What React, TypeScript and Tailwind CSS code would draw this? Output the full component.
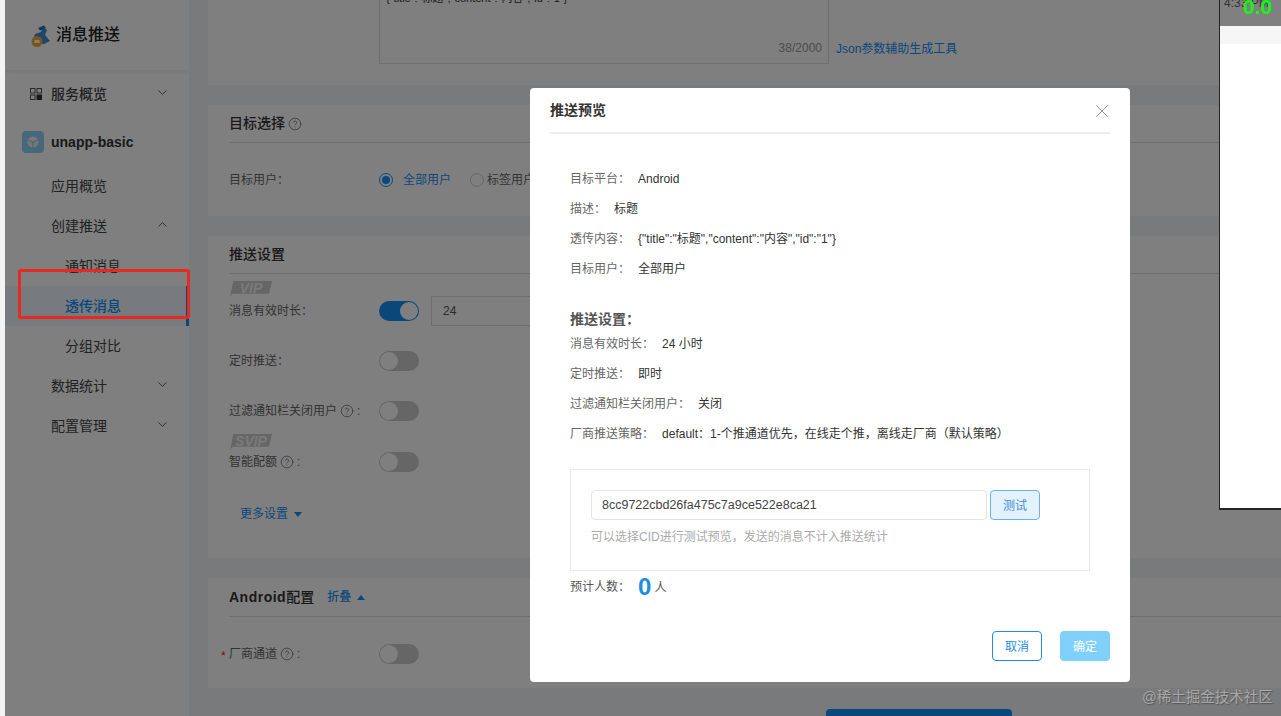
import React from 'react';
import { ChevronDown, ChevronUp, CircleHelp, X } from 'lucide-react';

const Toggle = ({ on = false }: { on?: boolean }) => (
  <div className={`flex h-5 w-10 items-center rounded-full ${on ? 'justify-end bg-[#1490f8]' : 'justify-start bg-[#ccc]'}`}>
    <div className="h-[18px] w-[18px] rounded-full bg-white mx-px" />
  </div>
);

const Badge = ({ text }: { text: string }) => (
  <div className="flex h-4 w-[42px] items-center justify-center bg-[#cccccc] text-[14px] font-bold italic leading-none text-[#f4f4f4] [clip-path:polygon(8%_0,100%_0,93%_80%,6%_80%,0_100%)]">
    <span className="-mt-[3px]">{text}</span>
  </div>
);

const SideRow = ({ label, sub, open, active, bold }: { label: string; sub?: boolean; open?: boolean; active?: boolean; bold?: boolean }) => (
  <div className={`relative flex h-10 items-center justify-between pr-[19px] text-[14px] ${sub ? 'pl-[60px]' : 'pl-[46px]'} ${active ? 'bg-[#eef6ff] text-[#1490f8]' : 'text-[#444]'} ${bold ? 'font-medium' : ''}`}>
    <span>{label}</span>
    {open === true && <ChevronUp size={15} strokeWidth={1.5} className="-mt-1 text-[#555]" />}
    {open === false && <ChevronDown size={15} strokeWidth={1.5} className="-mt-1 text-[#555]" />}
    {active && <div className="absolute right-0 top-0 h-10 w-[3px] bg-[#1490f8]" />}
  </div>
);

const Sidebar = () => (
  <aside className="w-[184px] shrink-0 bg-white">
    <div className="flex h-[70px] items-center gap-[6px] pb-px pl-[25px] shadow-[0_2px_4px_rgba(0,0,0,0.08)]">
      <svg width="20" height="22" viewBox="0 0 20 22" className="mt-[2px]">
        <path d="M2 18 L5 9 L11 7 L13 2 L17 5 L15 10 L20 16 L14 19 Z" fill="#3b8fd0" />
        <path d="M8 3 L14 0.5 L16 3 L10 5.5 Z" fill="#2a6ea8" />
        <circle cx="7" cy="16.5" r="5.5" fill="#f2a83b" />
        <rect x="4.5" y="15" width="5" height="3" fill="#fff" />
      </svg>
      <span className="text-[16px] font-medium text-[#222]">消息推送</span>
    </div>
    <div className="relative mt-1">
      <svg width="12" height="12" viewBox="0 0 12 12" className="absolute left-[25px] top-[14px]">
        <rect x="0.5" y="0.5" width="4.5" height="4.5" fill="none" stroke="#555" />
        <rect x="7" y="0.5" width="4.5" height="4.5" fill="none" stroke="#555" />
        <rect x="0.5" y="7" width="4.5" height="4.5" fill="none" stroke="#555" />
        <rect x="6.5" y="6.5" width="5.5" height="5.5" fill="#333" />
      </svg>
      <SideRow label="服务概览" open={false} bold />
    </div>
    <div className="mt-2 flex h-10 items-center gap-[7px] pl-[17px]">
      <div className="flex h-[22px] w-[22px] items-center justify-center rounded bg-[#8fd0f5]">
        <svg width="12" height="12" viewBox="0 0 12 12">
          <circle cx="6" cy="6" r="5.5" fill="#e6f3fb" />
          <path d="M1.5 4 L6 6.5 L10.5 4 M6 6.5 V11.5" stroke="#8fb9d4" fill="none" />
        </svg>
      </div>
      <span className="text-[14px] font-bold text-[#333]">unapp-basic</span>
    </div>
    <div className="mt-1">
      <SideRow label="应用概览" />
      <SideRow label="创建推送" open />
      <SideRow label="通知消息" sub />
      <SideRow label="透传消息" sub active bold />
      <SideRow label="分组对比" sub />
      <SideRow label="数据统计" open={false} />
      <SideRow label="配置管理" open={false} />
    </div>
  </aside>
);

const Help = () => <CircleHelp size={14} strokeWidth={1.25} className="mx-[3px] inline-block text-[#666]" />;

const FormRow = ({ label, children }: { label: React.ReactNode; children?: React.ReactNode }) => (
  <div className="flex h-[30px] items-center">
    <div className="w-[150px] shrink-0 text-[12px] text-[#666]">{label}</div>
    {children}
  </div>
);

const CardHead = ({ children, h }: { children: React.ReactNode; h: string }) => (
  <div className={`flex items-center border-b border-[#ddd] text-[14px] font-medium text-[#333] ${h}`}>{children}</div>
);

const Main = () => (
  <main className="min-w-0 flex-1 bg-[#f2f5f8] pl-[19px]">
    {/* scrolled part of the message form */}
    <section className="h-[85px] overflow-hidden bg-white pl-[171px]">
      <div className="-mt-[10px] flex items-end gap-[7px]">
        <div className="flex h-[74px] w-[450px] flex-col justify-between border border-[#ddd] px-[6px] text-[11px] text-[#333]">
          <div className="leading-[14px]">{'{"title":"标题","content":"内容","id":"1"}'}</div>
          <div className="mb-[6px] text-right text-[12px] text-[#999]">38/2000</div>
        </div>
        <span className="mb-[6px] text-[12px] text-[#1490f8]">Json参数辅助生成工具</span>
      </div>
    </section>

    <section className="mt-5 h-[111px] bg-white pl-[21px]">
      <CardHead h="h-[38px]">
        目标选择<Help />
      </CardHead>
      <div className="mt-[22px]">
        <FormRow label="目标用户：">
          <div className="flex h-[14px] w-[14px] items-center justify-center rounded-full border border-[#1490f8]">
            <div className="h-2 w-2 rounded-full bg-[#1490f8]" />
          </div>
          <span className="ml-[10px] text-[12px] text-[#1490f8]">全部用户</span>
          <div className="ml-[19px] h-[14px] w-[14px] rounded-full border border-[#ccc]" />
          <span className="ml-[3px] text-[12px] text-[#666]">标签用户</span>
        </FormRow>
      </div>
    </section>

    <section className="mt-5 h-[322px] bg-white pl-[21px]">
      <CardHead h="h-[38px]">推送设置</CardHead>
      <div className="ml-px pt-[7px]">
        <Badge text="VIP" />
      </div>
      <div className="-mt-px">
        <FormRow label="消息有效时长：">
          <Toggle on />
          <div className="ml-3 flex h-[30px] w-[300px] items-center border border-[#ddd] px-[11px] text-[12px] text-[#555]">24</div>
        </FormRow>
      </div>
      <div className="mt-5">
        <FormRow label="定时推送：">
          <Toggle />
        </FormRow>
      </div>
      <div className="mt-5">
        <FormRow label={<span className="flex items-center">过滤通知栏关闭用户<Help />:</span>}>
          <Toggle />
        </FormRow>
      </div>
      <div className="ml-px mt-2">
        <Badge text="SVIP" />
      </div>
      <div className="-mt-[3px]">
        <FormRow label={<span className="flex items-center">智能配额<Help />:</span>}>
          <Toggle />
        </FormRow>
      </div>
      <div className="ml-[11px] mt-[22px] flex h-[30px] items-center gap-[6px] text-[12px] text-[#1490f8]">
        更多设置
        <div className="h-0 w-0 border-x-[4px] border-t-[5px] border-x-transparent border-t-[#1490f8]" />
      </div>
    </section>

    <section className="mt-5 h-[110px] bg-white pl-[21px]">
      <CardHead h="h-[39px]">
        <span className="font-bold tracking-[0.5px]">Android</span>配置
        <span className="ml-[13px] text-[12px] text-[#1490f8]">折叠</span>
        <div className="ml-[6px] h-0 w-0 border-x-[4px] border-b-[5px] border-x-transparent border-b-[#1490f8]" />
      </CardHead>
      <div className="relative mt-[22px]">
        <span className="absolute -left-2 top-[8px] text-[12px] text-[#f5222d]">*</span>
        <FormRow label={<span className="flex items-center">厂商通道<Help />:</span>}>
          <Toggle />
        </FormRow>
      </div>
    </section>

    <div className="ml-[618px] mt-[21px] h-10 w-[186px] rounded-sm bg-[#1490f8]" />
  </main>
);

const InfoRow = ({ label, value }: { label: string; value: string }) => (
  <div className="flex h-[30px] items-center gap-2 text-[12px]">
    <span className="text-[#666]">{label}：</span>
    <span className="text-[#333]">{value}</span>
  </div>
);

const PreviewModal = () => (
  <div className="absolute left-[525px] top-[88px] w-[600px] rounded bg-white px-5 pb-[21px]">
    <div className="flex h-[46px] items-center justify-between border-b-2 border-[#eee] pt-px text-[14px] font-bold text-[#333]">
      推送预览
      <X size={22} strokeWidth={1} className="-mr-[3px] text-[#888]" />
    </div>
    <div className="px-5">
      <div className="mt-[30px]">
        <InfoRow label="目标平台" value="Android" />
        <InfoRow label="描述" value="标题" />
        <InfoRow label="透传内容" value={'{"title":"标题","content":"内容","id":"1"}'} />
        <InfoRow label="目标用户" value="全部用户" />
      </div>
      <div className="mt-[25px] h-5 text-[14px] font-bold leading-5 text-[#555]">推送设置：</div>
      <div>
        <InfoRow label="消息有效时长" value="24 小时" />
        <InfoRow label="定时推送" value="即时" />
        <InfoRow label="过滤通知栏关闭用户" value="关闭" />
        <InfoRow label="厂商推送策略" value="default：1-个推通道优先，在线走个推，离线走厂商（默认策略）" />
      </div>
      <div className="mt-5 h-[102px] border border-[#e8e8e8] px-5 pt-5">
        <div className="flex items-center gap-[3px]">
          <div className="flex h-[30px] w-[396px] items-center rounded-sm border border-[#e4e4e4] px-[10px] pt-px text-[12.5px] text-[#444]">
            8cc9722cbd26fa475c7a9ce522e8ca21
          </div>
          <div className="flex h-[30px] w-[50px] items-center justify-center rounded-sm border border-[#6ab3e8] bg-[#e3f2fe] pt-px text-[12px] text-[#3d8fd8]">
            测试
          </div>
        </div>
        <div className="mt-2 text-[12px] text-[#aaa]">可以选择CID进行测试预览，发送的消息不计入推送统计</div>
      </div>
      <div className="flex h-[30px] items-center pt-px text-[12px] text-[#555]">
        预计人数：
        <span className="ml-2 text-[24px] font-bold text-[#1c8fe3]">0</span>
        <span className="ml-[3px] mt-[2px]">人</span>
      </div>
    </div>
    <div className="mt-[30px] flex justify-end gap-[18px]">
      <div className="flex h-[30px] w-[50px] items-center justify-center rounded-sm border border-[#1c8fe3] pt-px text-[12px] text-[#1c8fe3]">取消</div>
      <div className="flex h-[30px] w-[50px] items-center justify-center rounded-sm bg-[#7fd0fa] pt-px text-[12px] text-white">确定</div>
    </div>
  </div>
);

const PhoneWindow = () => (
  <div className="absolute left-[1214px] top-0 h-[510px] w-[62px] overflow-hidden border-b-2 border-l border-[#23232b] bg-white">
    <div className="relative h-[26px] bg-[#808080]">
      <span className="absolute -top-[6px] left-[4px] text-[12px] text-[#333]">4:33 PM</span>
      <span className="absolute -top-[9px] left-[23px] text-[21px] font-bold text-[#19f219]">0.0</span>
    </div>
    <div className="h-[18px] bg-[#f6f6f6]" />
  </div>
);

const App = () => {
  return (
    <div className="flex h-[716px] w-[1281px] overflow-hidden bg-[#f4f4f4] font-['Liberation_Sans','Noto_Sans_CJK_SC',sans-serif]">
      <div className="relative ml-[5px] flex flex-1 overflow-hidden">
        <Sidebar />
        <Main />
        {/* dialog mask */}
        <div className="absolute inset-0 bg-black/50" />
        <PreviewModal />
        <PhoneWindow />
        {/* red annotation over the menu */}
        <div className="absolute left-[13px] top-[269px] h-[50px] w-[172px] rounded-[3px] border-[3px] border-[#e8291f]" />
        <span className="absolute left-[1137px] top-[690px] whitespace-nowrap text-[14.5px] leading-none text-[#a8a8a8] [text-shadow:1px_1px_1px_rgba(60,60,60,0.6)]">@稀土掘金技术社区</span>
      </div>
    </div>
  );
};

export default App;
